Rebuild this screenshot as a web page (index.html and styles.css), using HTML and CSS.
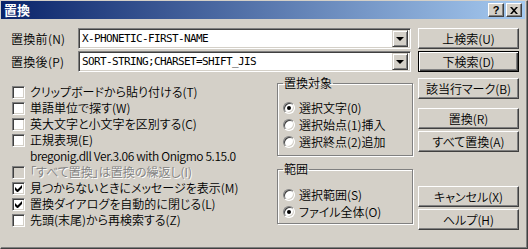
FILE: index.html
```html
<!DOCTYPE html>
<html lang="ja">
<head>
    <meta charset="UTF-8">
    <title>置換</title>
    <link rel="stylesheet" href="styles.css">
</head>
<body>
    <div class="window">
        <div class="titlebar">
            <span class="title">置換</span>
            <div class="title-buttons">
                <span class="tbtn help">?</span>
                <span class="tbtn close">
                    <svg width="8" height="7" viewBox="0 0 8 7"><path d="M0 0h2l2 2.2L6 0h2L5 3.5 8 7H6L4 4.8 2 7H0l3-3.5z" fill="#000"/></svg>
                </span>
            </div>
        </div>

        <div class="client">
            <div class="main">
                <div class="field">
                    <label class="field-label">置換前(N)</label>
                    <div class="combo">
                        <span class="combo-text">X-PHONETIC-FIRST-NAME</span>
                        <span class="drop"><span class="arrow"></span></span>
                    </div>
                </div>
                <div class="field">
                    <label class="field-label">置換後(P)</label>
                    <div class="combo">
                        <span class="combo-text">SORT-STRING;CHARSET=SHIFT_JIS</span>
                        <span class="drop"><span class="arrow"></span></span>
                    </div>
                </div>

                <div class="lower">
                    <ul class="options">
                        <li class="option"><span class="check"></span>クリップボードから貼り付ける(T)</li>
                        <li class="option"><span class="check"></span>単語単位で探す(W)</li>
                        <li class="option"><span class="check"></span>英大文字と小文字を区別する(C)</li>
                        <li class="option"><span class="check"></span>正規表現(E)</li>
                        <li class="option note">bregonig.dll Ver.3.06 with Onigmo 5.15.0</li>
                        <li class="option disabled"><span class="check"></span>「すべて置換」は置換の繰返し(I)</li>
                        <li class="option"><span class="check checked"><svg width="7" height="7" viewBox="0 0 7 7"><path d="M0 2v3l2 2h1l4-4V0L2.5 4.5z" fill="#000"/></svg></span>見つからないときにメッセージを表示(M)</li>
                        <li class="option"><span class="check checked"><svg width="7" height="7" viewBox="0 0 7 7"><path d="M0 2v3l2 2h1l4-4V0L2.5 4.5z" fill="#000"/></svg></span>置換ダイアログを自動的に閉じる(L)</li>
                        <li class="option"><span class="check"></span>先頭(末尾)から再検索する(Z)</li>
                    </ul>

                    <div class="groups">
                        <fieldset class="group target">
                            <legend>置換対象</legend>
                            <div class="radio-row"><span class="radio on"></span>選択文字(0)</div>
                            <div class="radio-row"><span class="radio"></span>選択始点(1)挿入</div>
                            <div class="radio-row"><span class="radio"></span>選択終点(2)追加</div>
                        </fieldset>
                        <fieldset class="group range">
                            <legend>範囲</legend>
                            <div class="radio-row"><span class="radio"></span>選択範囲(S)</div>
                            <div class="radio-row"><span class="radio on"></span>ファイル全体(O)</div>
                        </fieldset>
                    </div>
                </div>
            </div>

            <div class="actions">
                <button class="btn">上検索(U)</button>
                <button class="btn default">下検索(D)</button>
                <button class="btn mark">該当行マーク(B)</button>
                <button class="btn replace">置換(R)</button>
                <button class="btn">すべて置換(A)</button>
                <button class="btn cancel">キャンセル(X)</button>
                <button class="btn">ヘルプ(H)</button>
            </div>
        </div>
    </div>
</body>
</html>
```

FILE: styles.css
```css
* {
    margin: 0;
    padding: 0;
    box-sizing: border-box;
}

body {
    width: 528px;
    height: 249px;
    overflow: hidden;
    background: #d4d0c8;
    font-family: "Noto Sans CJK JP", "Liberation Sans", sans-serif;
    font-size: 12px;
    font-weight: 350;
    font-feature-settings: "palt";
    line-height: 16px;
    color: #000;
}

.window {
    width: 528px;
    height: 249px;
    border: 1px solid;
    border-color: #d4d0c8 #404040 #404040 #d4d0c8;
    box-shadow: inset -1px -1px #808080;
    padding: 0 2px 2px 0;
    background: #d4d0c8;
}

.titlebar {
    height: 18px;
    display: flex;
    align-items: center;
    justify-content: space-between;
    padding: 0 3px 0 3px;
    background: linear-gradient(to right, #0a246a, #a6caf0);
    color: #fff;
}

.title {
    font-weight: bold;
    font-size: 13px;
}

.title-buttons {
    display: flex;
    gap: 2px;
}

.tbtn {
    width: 16px;
    height: 14px;
    display: flex;
    align-items: center;
    justify-content: center;
    background: #d4d0c8;
    border: 1px solid;
    border-color: #fff #404040 #404040 #fff;
    box-shadow: inset -1px -1px #808080;
    color: #000;
    font-family: "Liberation Sans", sans-serif;
    font-weight: bold;
    font-size: 11px;
    line-height: 12px;
}

.client {
    display: flex;
    gap: 5px;
    padding: 9px 0 0 10px;
}

.main {
    width: 402px;
}

.field {
    display: flex;
    align-items: center;
    height: 21px;
}

.field + .field {
    margin-top: 2px;
}

.field-label {
    width: 67px;
    letter-spacing: 0.3px;
}

.combo {
    width: 333px;
    height: 21px;
    display: flex;
    align-items: center;
    justify-content: space-between;
    background: #fff;
    border: 1px solid;
    border-color: #808080 #fff #fff #808080;
    box-shadow: inset 1px 1px #404040, inset -1px -1px #d4d0c8;
    padding: 1px 2px 1px 3px;
}

.combo-text {
    font-family: "DejaVu Sans Mono", monospace;
    font-size: 11px;
    font-weight: normal;
    letter-spacing: -0.62px;
}

.drop {
    width: 16px;
    height: 17px;
    display: flex;
    align-items: center;
    justify-content: center;
    background: #d4d0c8;
    border: 1px solid;
    border-color: #d4d0c8 #404040 #404040 #d4d0c8;
    box-shadow: inset 1px 1px #fff, inset -1px -1px #808080;
}

.arrow {
    width: 0;
    height: 0;
    border-left: 4px solid transparent;
    border-right: 4px solid transparent;
    border-top: 4px solid #000;
    margin-top: 1px;
}

.lower {
    display: flex;
    justify-content: space-between;
    align-items: flex-start;
}

.options {
    list-style: none;
    margin-top: 12px;
    padding-left: 1px;
}

.option {
    height: 16px;
    display: flex;
    align-items: center;
    white-space: nowrap;
}

.option.note {
    padding-left: 18px;
    letter-spacing: -0.4px;
}

.option.disabled {
    color: #808080;
    text-shadow: 1px 1px 0 #fff;
}

.check {
    width: 13px;
    height: 13px;
    margin-right: 5px;
    display: flex;
    align-items: center;
    justify-content: center;
    background: #fff;
    border: 1px solid;
    border-color: #808080 #fff #fff #808080;
    box-shadow: inset 1px 1px #404040, inset -1px -1px #d4d0c8;
}

.disabled .check {
    background: #d4d0c8;
}

.groups {
    width: 136px;
    margin-top: 4px;
    display: flex;
    flex-direction: column;
    gap: 6px;
}

.group {
    border: 1px solid #808080;
    box-shadow: inset 1px 1px #fff, 1px 1px #fff;
    padding: 9px 0 5px 5px;
}

.group.range {
    padding: 10px 0 3px 5px;
}

.group legend {
    padding: 0 1px;
    line-height: 14px;
}

.radio-row {
    height: 17px;
    display: flex;
    align-items: center;
    white-space: nowrap;
}

.radio {
    width: 12px;
    height: 12px;
    margin-right: 4px;
    border-radius: 50%;
    background: #fff;
    border: 1px solid;
    border-color: #808080 #fff #fff #808080;
    box-shadow: inset 1px 1px #404040, inset -1px -1px #d4d0c8;
    display: flex;
    align-items: center;
    justify-content: center;
}

.radio.on::after {
    content: "";
    width: 4px;
    height: 4px;
    border-radius: 50%;
    background: #000;
}

.actions {
    display: flex;
    flex-direction: column;
    width: 101px;
}

.btn {
    height: 21px;
    width: 101px;
    margin-bottom: 2px;
    font: inherit;
    color: #000;
    background: #d4d0c8;
    border: 1px solid;
    border-color: #fff #404040 #404040 #fff;
    box-shadow: inset -1px -1px #808080;
}

.btn.default {
    border-color: #000;
    box-shadow: inset 1px 1px #fff, inset -1px -1px #404040, inset -2px -2px #808080;
}

.btn.mark {
    margin-top: 4px;
}

.btn.replace {
    margin-top: 7px;
}

.btn.cancel {
    margin-top: 32px;
}
```
